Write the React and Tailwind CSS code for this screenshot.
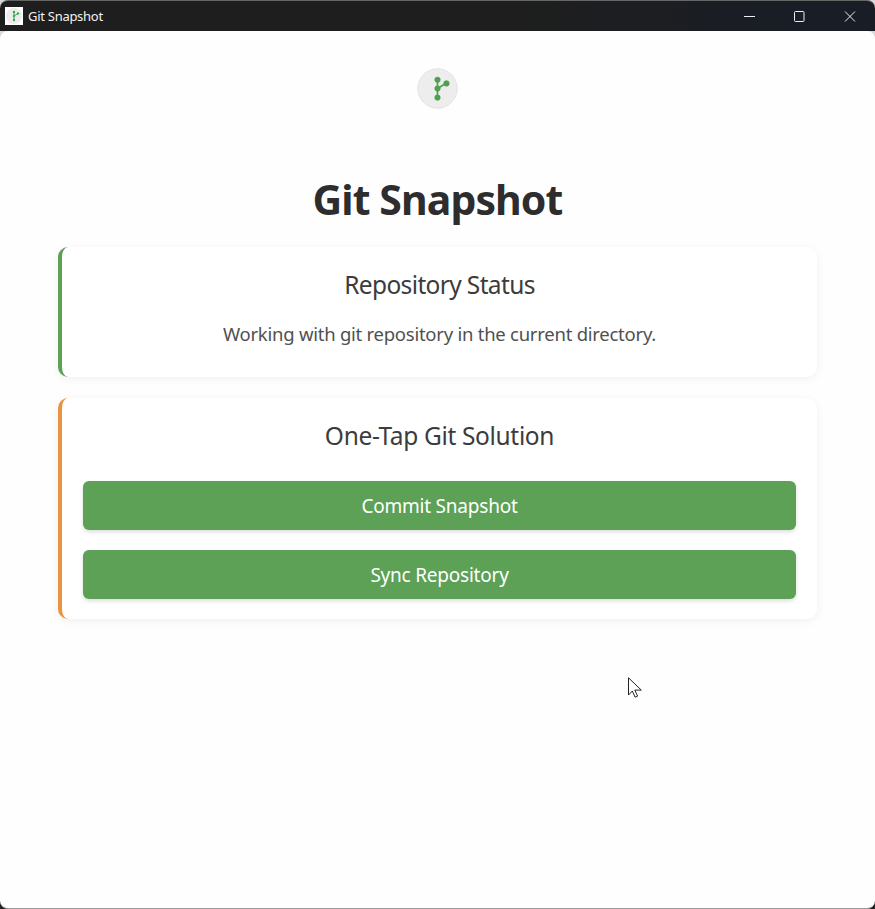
function Branch({ className }) {
  return (
    <svg viewBox="0 0 42 42" className={className} fill="#4fa04e" stroke="#4fa04e">
      <circle cx="21" cy="21" r="20.2" fill="#ededed" stroke="#dedede" strokeWidth="0.8" />
      <path d="M21 12V30M21 21l9-5.3" fill="none" strokeWidth="1.7" />
      <circle cx="21" cy="12" r="2.9" strokeWidth="0.4" />
      <circle cx="21" cy="21" r="2.9" strokeWidth="0.4" />
      <circle cx="21" cy="30.3" r="2.9" strokeWidth="0.4" />
      <circle cx="30.2" cy="15.8" r="2.9" strokeWidth="0.4" />
    </svg>
  );
}

function TitleBar() {
  return (
    <header className="flex h-[31px] items-center justify-between rounded-t-lg border-t border-[#666] bg-gradient-to-r from-[#1e1e1e] from-60% to-[#191d25] to-90% pl-[5px] pr-[19px]">
      <div className="flex items-center gap-[5px]">
        <span className="flex size-[18px] items-center justify-center bg-white">
          <svg viewBox="0 0 18 18" className="size-[18px]" fill="#3aa655" stroke="#3aa655">
            <circle cx="9" cy="9" r="8" fill="#ededed" stroke="none" />
            <path d="M9 4.5V13M9 9l4-2.5" fill="none" strokeWidth="1" />
            <circle cx="9" cy="5" r="1.2" stroke="none" />
            <circle cx="9" cy="9" r="1.2" stroke="none" />
            <circle cx="9" cy="13" r="1.2" stroke="none" />
            <circle cx="13" cy="6.5" r="1.2" stroke="none" />
          </svg>
        </span>
        <span className="text-[13px] leading-none tracking-[-0.28px] text-[#f2f2f2]">Git Snapshot</span>
      </div>
      <svg width="112" height="11" viewBox="0 0 112 11" fill="none" stroke="#eee" strokeWidth="1">
        <path d="M0 5.5h11" />
        <rect x="50.5" y="0.5" width="9.5" height="10" rx="1" />
        <path d="M101 0.5l10 10M111 0.5l-10 10" />
      </svg>
    </header>
  );
}

function Card({ title, titleClass, accent, className, children }) {
  return (
    <section
      className={`rounded-[10px] border-l-4 bg-white px-[21px] text-center shadow-[0_2px_10px_rgba(0,0,0,0.06)] ${accent} ${className}`}
    >
      <h2 className={`text-[24.5px] leading-[36px] text-[#3c3c3c] ${titleClass}`}>{title}</h2>
      {children}
    </section>
  );
}

function ActionButton({ children }) {
  return (
    <button className="block h-[49px] w-full rounded-md bg-[#5ca156] text-[19px] leading-[50px] tracking-[-0.22px] text-white shadow-[0_2px_4px_rgba(0,0,0,0.14)]">
      {children}
    </button>
  );
}

export default function App() {
  return (
    <div className="relative h-[909px] w-[875px] overflow-hidden bg-gradient-to-b from-[#d8d8d8] from-50% to-[#222] to-50% font-['Noto_Sans','Open_Sans',sans-serif]">
      <TitleBar />
      <div className="h-[878px] rounded-lg border-b border-[#999] bg-[#fefefe] px-[58px] pt-[37px]">
        <main className="w-[759px]">
          <Branch className="mx-auto size-[41px]" />
          <h1 className="mt-[60px] h-[78px] text-center text-[41px] font-bold leading-[60px] tracking-[-0.9px] text-[#2d2d2d]">
            Git Snapshot
          </h1>
          <Card
            title="Repository Status"
            titleClass="tracking-[-0.64px]"
            accent="border-l-[#5ca156]"
            className="h-[130px] pt-5"
          >
            <p className="mt-[17px] text-[18.5px] leading-[28px] tracking-[-0.25px] text-[#505050]">
              Working with git repository in the current directory.
            </p>
          </Card>
          <Card
            title="One-Tap Git Solution"
            titleClass="tracking-[-0.34px]"
            accent="border-l-[#e9943f]"
            className="mt-[21px] h-[221px] pt-5"
          >
            <div className="mt-[27px] flex flex-col gap-[19.5px]">
              <ActionButton>Commit Snapshot</ActionButton>
              <ActionButton>Sync Repository</ActionButton>
            </div>
          </Card>
        </main>
      </div>
      <svg className="absolute left-[628px] top-[677px]" width="15" height="22" viewBox="0 0 15 22" fill="#fff" stroke="#222" strokeWidth="1">
        <path d="M0.5 0.8V18l3.8-4 2.8 6.2 2.5-1.1-2.8-6H13.3z" />
      </svg>
    </div>
  );
}
